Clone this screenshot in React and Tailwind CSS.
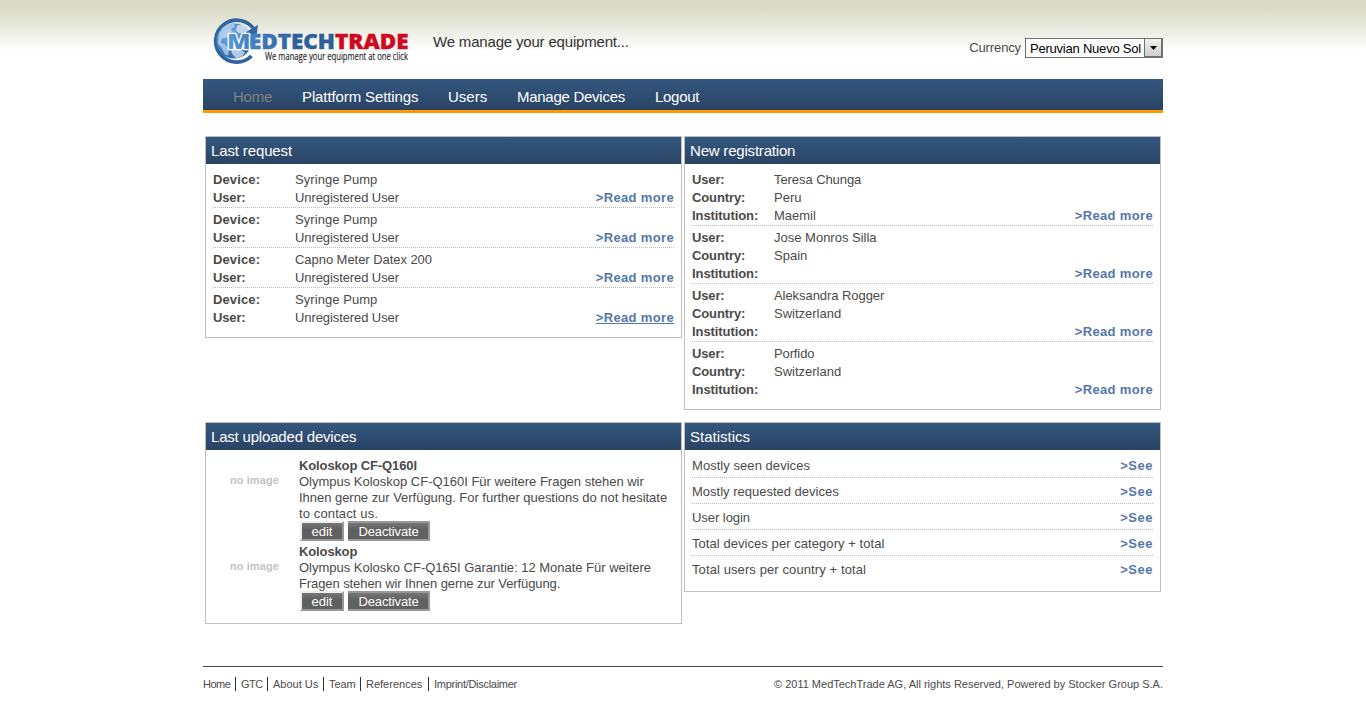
import React from "react";

const NAV = [
  ["Home", "w-[69px] tracking-[-0.25px]", "text-[#808080]"],
  ["Plattform Settings", "w-[146px] tracking-[-0.11px]", "text-white"],
  ["Users", "w-[69px]", "text-white"],
  ["Manage Devices", "w-[138px] tracking-[-0.27px]", "text-white"],
  ["Logout", "w-[60px] tracking-[-0.3px]", "text-white"],
];

const REQUESTS = [
  ["Syringe Pump", "Unregistered User"],
  ["Syringe Pump", "Unregistered User"],
  ["Capno Meter Datex 200", "Unregistered User"],
  ["Syringe Pump", "Unregistered User"],
];

const REGISTRATIONS = [
  ["Teresa Chunga", "Peru", "Maemil"],
  ["Jose Monros Silla", "Spain", ""],
  ["Aleksandra Rogger", "Switzerland", ""],
  ["Porfido", "Switzerland", ""],
];

const STATS = [
  ["Mostly seen devices", "tracking-[0.05px]"],
  ["Mostly requested devices", ""],
  ["User login", "tracking-[-0.05px]"],
  ["Total devices per category + total", "tracking-[0.06px]"],
  ["Total users per country + total", "tracking-[0.1px]"],
];

const SPACING = {
  "Device:": "tracking-[0.12px]",
  "User:": "tracking-[-0.15px]",
  "Country:": "tracking-[-0.12px]",
  "Institution:": "tracking-[-0.08px]",
  "Syringe Pump": "tracking-[0.06px]",
  "Unregistered User": "tracking-[-0.09px]",
  "Capno Meter Datex 200": "tracking-[-0.05px]",
  "Teresa Chunga": "tracking-[-0.07px]",
  "Aleksandra Rogger": "tracking-[-0.06px]",
  "Porfido": "tracking-[-0.12px]",
};

const DEVICES = [
  {
    name: "Koloskop CF-Q160I",
    lines: [
      ["Olympus Koloskop CF-Q160I Für weitere Fragen stehen wir", "tracking-[-0.01px]"],
      ["Ihnen gerne zur Verfügung. For further questions do not hesitate", "tracking-[-0.03px]"],
      ["to contact us.", "tracking-[0.12px]"],
    ],
  },
  {
    name: "Koloskop",
    lines: [
      ["Olympus Kolosko CF-Q165I Garantie: 12 Monate Für weitere", "tracking-[-0.01px]"],
      ["Fragen stehen wir Ihnen gerne zur Verfügung.", "tracking-[-0.09px]"],
    ],
  },
];

const FOOTER = [
  ["Home", "w-[33px] tracking-[-0.5px]"],
  ["GTC", "w-[27px] tracking-[-0.5px]"],
  ["About Us", "w-[51px]"],
  ["Team", "w-[32px] tracking-[-0.1px]"],
  ["References", "w-[63px]"],
  ["Imprint/Disclaimer", "w-[90px] tracking-[-0.28px]"],
];

function Logo() {
  return (
    <svg width="200" height="56" viewBox="0 0 200 56" className="block overflow-visible">
      <defs>
        <radialGradient id="globe" cx="35%" cy="30%" r="80%">
          <stop offset="0" stopColor="#7fb2e3" />
          <stop offset="0.5" stopColor="#4a87c8" />
          <stop offset="1" stopColor="#2a5f9f" />
        </radialGradient>
        <linearGradient id="letterM" x1="0" y1="0" x2="1" y2="0">
          <stop offset="0" stopColor="#5b9ad8" />
          <stop offset="1" stopColor="#3f7fc3" />
        </linearGradient>
        <linearGradient id="word" gradientUnits="userSpaceOnUse" x1="38" y1="0" x2="85" y2="0">
          <stop offset="0" stopColor="#4384c6" />
          <stop offset="1" stopColor="#2d6099" />
        </linearGradient>
      </defs>
      <g transform="translate(-1 1.5)">
        <path d="M44.5 13.5A21 21 0 1 0 41.5 39.5" fill="none" stroke="#2f649f" strokeWidth="3.7" />
        <circle cx="24" cy="24.5" r="17.6" fill="url(#globe)" />
        <path d="M9 17l4-6 5-3 6-1 1 3-4 2 1 3-4 2-1 4-5 1-1 4 4 2 4 4-1 7-3-1-3-6-4-5z" fill="#dbe9f6" opacity=".6" />
        <path d="M27 9l6-1 5 5 3 5-5 1-3-3-4 1-3-3z" fill="#dbe9f6" opacity=".8" />
        <path d="M21 31l8 1 6 4-3 4-6 2-4-5z" fill="#dbe9f6" opacity=".75" />
        <path d="M48 8.2L46.6 18.8 35.5 16z" fill="#2f649f" />
      </g>
      <g fontFamily="'Open Sans', sans-serif" fontWeight="800" fontSize="20.7">
        <text x="38" y="33.6" textLength="86" lengthAdjust="spacingAndGlyphs" fill="url(#word)" stroke="url(#word)" strokeWidth="0.4">EDTECH</text>
        <text x="16" y="33.6" textLength="23.5" lengthAdjust="spacingAndGlyphs" fill="url(#letterM)" stroke="#fff" strokeWidth="2.4" paintOrder="stroke" strokeLinejoin="round">M</text>
        <text x="124" y="33.6" textLength="73.5" lengthAdjust="spacingAndGlyphs" fill="#cf0a20" stroke="#cf0a20" strokeWidth="0.4">TRADE</text>
      </g>
      <text x="54" y="44.8" textLength="143" lengthAdjust="spacingAndGlyphs" fontFamily="'Open Sans', sans-serif" fontWeight="500" fontSize="10" fill="#222" stroke="#222" strokeWidth="0.15">We manage your equipment at one click</text>
    </svg>
  );
}

function Panel({ title, className, titleClass = "", children }) {
  return (
    <section className={`w-[477px] border border-[#bfbfbf] bg-white ${className}`}>
      <h2 className={`h-[27px] bg-linear-to-b from-[#345780] to-[#2a4364] pl-[5px] text-[15px] leading-[27px] font-normal text-white ${titleClass}`}>
        {title}
      </h2>
      {children}
    </section>
  );
}

function More({ children, underline, spacing }) {
  return (
    <a className={`ml-auto self-end font-bold text-[#5576aa] ${spacing} ${underline ? "underline" : ""}`}>
      {children}
    </a>
  );
}

function Records({ labels, records, underlineLast }) {
  return (
    <div className="pt-1 pr-[7px] pb-[10px] pl-[7px] leading-[18px]">
      {records.map((rec, i) => (
        <div
          key={i}
          className={`flex pt-[3px] ${i < records.length - 1 ? "border-b border-dotted border-[#bbb]" : ""}`}
        >
          <div>
            {labels.map((label, j) => (
              <div key={label} className="flex h-[18px]">
                <b className={`w-[82px] ${SPACING[label] || ""}`}>{label}</b>
                <span className={SPACING[rec[j]] || ""}>{rec[j]}</span>
              </div>
            ))}
          </div>
          <More spacing="tracking-[0.34px]" underline={underlineLast && i === records.length - 1}>
            &gt;Read more
          </More>
        </div>
      ))}
    </div>
  );
}

function Device({ name, lines }) {
  return (
    <div className="flex">
      <div className="w-[93px] pt-[14px] pl-[24px] text-[11px] leading-4 font-bold tracking-[0.08px] text-[#c3c3c3]">no image</div>
      <div className="whitespace-nowrap">
        <b className="block tracking-[-0.12px]">{name}</b>
        {lines.map(([text, spacing]) => (
          <p key={text} className={spacing}>{text}</p>
        ))}
        <div className="-mt-px flex h-[23px] gap-1 pl-px text-white">
          <button className="h-5 w-11 border-2 border-t-[#eee] border-r-[#999] border-b-[#999] border-l-[#eee] bg-linear-to-b from-[#777] to-[#606060] to-40% pt-px leading-[15px]">
            edit
          </button>
          <button className="h-5 w-[82px] border-t-2 border-r-2 border-b-2 border-[#999] bg-linear-to-b from-[#777] to-[#606060] to-40% pt-px pl-px leading-[15px] tracking-[-0.13px]">
            Deactivate
          </button>
        </div>
      </div>
    </div>
  );
}

export default function App() {
  return (
    <div className="min-h-[707px] bg-[linear-gradient(to_bottom,#dadac9_0px,#dadac9_7px,#e7e9dc_26px,#ffffff_51px)] font-['Liberation_Sans',Arial,sans-serif] text-[13px] text-[#4a4a4a]">
      <div className="mx-auto w-[960px]">
        <header className="flex h-[79px] items-start">
          <div className="pt-[15px] pl-2">
            <Logo />
          </div>
          <p className="ml-[22px] pt-[31px] text-[15px] leading-[22px] tracking-[-0.18px] text-[#333]">We manage your equipment...</p>
          <div className="ml-auto flex items-center pt-[38px]">
            <label className="mr-1 tracking-[-0.12px]">Currency</label>
            <div className="flex h-5 w-[138px] border border-r-2 border-[#707070] bg-white text-black">
              <span className="flex-1 pt-px pl-[4px] leading-[18px] tracking-[-0.22px] whitespace-nowrap">Peruvian Nuevo Sol</span>
              <span className="flex w-[17px] items-center justify-center border border-t-0 border-r-0 border-[#707070] bg-linear-to-b from-[#f2f2f2] to-[#cfcfcf]">
                <svg width="7" height="4" viewBox="0 0 7 4">
                  <path d="M0 0h7L3.5 4z" fill="#000" />
                </svg>
              </span>
            </div>
          </div>
        </header>

        <nav className="flex h-[34px] border-b-[3px] border-[#ff9900] bg-linear-to-b from-[#345780] to-[#2a4364] pl-[30px] text-[15px] leading-[35px]">
          {NAV.map(([label, w, color]) => (
            <a key={label} className={`whitespace-nowrap ${w} ${color}`}>
              {label}
            </a>
          ))}
        </nav>

        <main className="grid grid-cols-[477px_477px] grid-rows-[274px_202px] items-start gap-x-[2px] gap-y-3 pt-[23px] pl-[2px]">
          <Panel title="Last request" className="h-[202px]" titleClass="tracking-[-0.13px]">
            <Records labels={["Device:", "User:"]} records={REQUESTS} underlineLast />
          </Panel>
          <Panel title="New registration" className="h-[274px]" titleClass="tracking-[-0.2px]">
            <Records labels={["User:", "Country:", "Institution:"]} records={REGISTRATIONS} />
          </Panel>
          <Panel title="Last uploaded devices" className="h-[202px]" titleClass="tracking-[-0.19px]">
            <div className="pt-2 leading-4">
              {DEVICES.map((d) => (
                <Device key={d.name} {...d} />
              ))}
            </div>
          </Panel>
          <Panel title="Statistics" className="h-[170px]">
            <div className="px-[7px] pt-[2px] leading-[18px]">
              {STATS.map(([text, spacing], i) => (
                <div
                  key={text}
                  className={`flex pt-[5px] pb-[2px] ${i < STATS.length - 1 ? "border-b border-dotted border-[#bbb]" : ""}`}
                >
                  <span className={spacing}>{text}</span>
                  <More spacing="tracking-[0.5px]">&gt;See</More>
                </div>
              ))}
            </div>
          </Panel>
        </main>

        <footer className="mt-[42px] flex justify-between border-t border-[#4a4a4a] pt-[10px] text-[11px] leading-[14px]">
          <ul className="flex">
            {FOOTER.map(([label, w], i) => (
              <li
                key={label}
                className={`flex h-[14px] whitespace-nowrap ${w} ${i < FOOTER.length - 1 ? "mr-[5px] border-r border-[#333]" : ""}`}
              >
                {label}
              </li>
            ))}
          </ul>
          <p>© 2011 MedTechTrade AG, All rights Reserved, Powered by Stocker Group S.A.</p>
        </footer>
      </div>
    </div>
  );
}
